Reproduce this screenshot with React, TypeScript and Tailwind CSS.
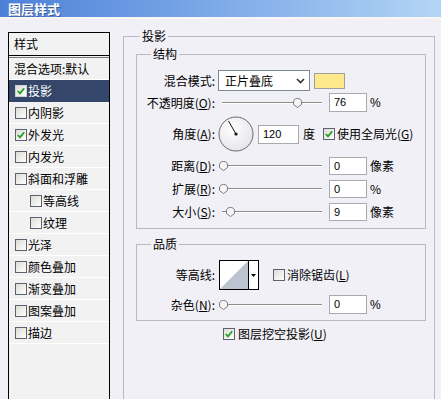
import React from "react";

const styles = [
  { t: "投影", on: true, sel: true },
  { t: "内阴影" },
  { t: "外发光", on: true },
  { t: "内发光" },
  { t: "斜面和浮雕" },
  { t: "等高线", sub: true },
  { t: "纹理", sub: true },
  { t: "光泽" },
  { t: "颜色叠加" },
  { t: "渐变叠加" },
  { t: "图案叠加" },
  { t: "描边" },
];

function Box({ on, className = "" }: { on?: boolean; className?: string }) {
  return (
    <span
      className={`flex h-[12px] w-[12px] shrink-0 items-center justify-center border border-[#5a6270] bg-gradient-to-br from-[#dcdcd6] to-white ${className}`}
    >
      {on && (
        <svg width="8" height="8" viewBox="0 0 8 8">
          <path d="M0.8 4 L3 6.3 L7.2 1.2" fill="none" stroke="#21a021" strokeWidth="1.8" />
        </svg>
      )}
    </span>
  );
}

function Lbl({ children }: { children: React.ReactNode }) {
  return <span className="w-[78px] shrink-0 text-right leading-[14px]">{children}</span>;
}

function Slider({ pos }: { pos: number }) {
  return (
    <div className="relative ml-[4px] h-[12px] w-[104px] shrink-0">
      <div className="absolute left-[3px] right-[1px] top-[5px] h-[2px] border-t border-[#8d8d8d] bg-white" />
      <svg className="absolute top-[1px]" style={{ left: pos }} width="9" height="10" viewBox="0 0 9 10">
        <path
          d="M0.5 4 C0.5 1.5 2.2 0.5 4.5 0.5 C6.8 0.5 8.5 1.5 8.5 4 V6.5 L4.5 9.5 L0.5 6.5 Z"
          fill="#f6f6f6"
          stroke="#7b7b7b"
        />
      </svg>
    </div>
  );
}

function Num({ v, className = "" }: { v: string; className?: string }) {
  return (
    <div
      className={`flex shrink-0 items-center border border-[#a9a9b0] bg-white pl-[4px] font-['Liberation_Sans',Arial,sans-serif] text-[11px] ${className}`}
    >
      {v}
    </div>
  );
}

export default function App() {
  return (
    <div className="flex h-[399px] w-[441px] flex-col overflow-hidden bg-[#f1f0f6] font-['Noto_Sans_CJK_SC',sans-serif] text-[12px] text-black">
      {/* title bar */}
      <div className="flex h-[17px] shrink-0 items-center bg-gradient-to-r from-[#4d81d8] via-[#7eaae8] to-[#b3d5f5] pl-[8px] text-[13px] font-bold leading-[16px] text-white [text-shadow:1px_1px_0_#3b5d96]">
        图层样式
      </div>
      <div className="h-[2px] shrink-0 bg-[#fbf5f5]" />

      <div className="flex flex-1">
        {/* style list */}
        <div className="ml-[8px] mt-[13px] flex h-[400px] w-[102px] shrink-0 flex-col border border-black bg-[#f2f2f2]">
          <div className="flex h-[23px] items-center border-b border-black pl-[5px] leading-[14px]">样式</div>
          <div className="h-[2px] border-b border-[#7a7a7a]" />
          <div className="flex h-[22px] items-center border-b border-white pl-[5px] leading-[14px]">混合选项:默认</div>
          {styles.map((s) => (
            <div
              key={s.t}
              className={`flex h-[22px] items-center border-b leading-[14px] ${
                s.sub ? "pl-[21px]" : "pl-[6px]"
              } ${s.sel ? "border-[#344669] bg-[#344669] text-white" : "border-white"}`}
            >
              <Box on={s.on} className={s.sel ? "border-[#d0d0d0]" : ""} />
              <span className="ml-[1px]">{s.t}</span>
            </div>
          ))}
        </div>

        {/* drop shadow */}
        <fieldset className="ml-[13px] mt-[9px] h-[400px] w-[312px] shrink-0 border border-[#b9b9c3] pl-[12px] pr-[8px]">
          <legend className="ml-[4px] px-[2px] leading-[16px]">投影</legend>

          <fieldset className="mt-[2px] h-[183px] w-[290px] border border-[#b9b9c3]">
            <legend className="ml-[14px] px-[2px] leading-[16px]">结构</legend>

            <div className="mt-[8px] flex h-[21px] items-center">
              <Lbl>混合模式:</Lbl>
              <div className="ml-[3px] flex h-[21px] w-[92px] shrink-0 items-center justify-between border border-[#7f8a98] bg-white pl-[6px] pr-[4px] leading-[14px]">
                正片叠底
                <svg width="9" height="6" viewBox="0 0 9 6">
                  <path d="M1 1 L4.5 4.5 L8 1" stroke="#333" strokeWidth="1.6" fill="none" />
                </svg>
              </div>
              <div className="ml-[4px] h-[16px] w-[31px] shrink-0 border border-[#a0a0a0] bg-[#fde98c]" />
            </div>

            <div className="mt-[2px] flex h-[19px] items-center">
              <Lbl>
                不透明度(<u>O</u>):
              </Lbl>
              <Slider pos={74} />
              <Num v="76" className="ml-[6px] h-[19px] w-[38px]" />
              <span className="ml-[3px] font-['Liberation_Sans',Arial,sans-serif]">%</span>
            </div>

            <div className="mt-[4px] flex h-[36px] items-center">
              <Lbl>
                角度(<u>A</u>):
              </Lbl>
              <svg className="ml-[3px] shrink-0" width="36" height="36" viewBox="0 0 36 36">
                <defs>
                  <radialGradient id="dg" cx="40%" cy="35%" r="70%">
                    <stop offset="0" stopColor="#ffffff" />
                    <stop offset="1" stopColor="#e4e4ea" />
                  </radialGradient>
                </defs>
                <circle cx="18" cy="18" r="17" fill="url(#dg)" stroke="#6a6a6a" />
                <line x1="18" y1="18" x2="10.5" y2="5" stroke="#111" strokeWidth="1" />
                <circle cx="18" cy="18" r="1.6" fill="#111" />
              </svg>
              <Num v="120" className="ml-[4px] h-[19px] w-[41px]" />
              <span className="ml-[4px] leading-[14px]">度</span>
              <Box on className="ml-[8px]" />
              <span className="ml-[2px] leading-[14px]">
                使用全局光(<u>G</u>)
              </span>
            </div>

            {[
              { l: "距离", k: "D", v: "0", u: "像素", p: 0 },
              { l: "扩展", k: "R", v: "0", u: "%", p: 0 },
              { l: "大小", k: "S", v: "9", u: "像素", p: 7 },
            ].map((r) => (
              <div key={r.k} className="mt-[5px] flex h-[18px] items-center">
                <Lbl>
                  {r.l}(<u>{r.k}</u>):
                </Lbl>
                <Slider pos={r.p} />
                <Num v={r.v} className="ml-[6px] h-[18px] w-[38px]" />
                <span className="ml-[3px] leading-[14px]">{r.u}</span>
              </div>
            ))}
          </fieldset>

          <fieldset className="mt-[7px] h-[85px] w-[290px] border border-[#b9b9c3]">
            <legend className="ml-[14px] px-[2px] leading-[16px]">品质</legend>

            <div className="mt-[8px] flex h-[30px] items-center">
              <Lbl>等高线:</Lbl>
              <div className="ml-[4px] flex h-[30px] w-[40px] shrink-0 border border-black bg-white">
                <svg className="shrink-0" width="28" height="28" viewBox="0 0 28 28">
                  <polygon points="0,28 28,0 28,28" fill="#bcc4cf" />
                </svg>
                <div className="flex flex-1 items-center justify-center border-l border-black">
                  <svg width="5" height="3" viewBox="0 0 5 3">
                    <polygon points="0,0 5,0 2.5,3" fill="#000" />
                  </svg>
                </div>
              </div>
              <Box className="ml-[14px]" />
              <span className="ml-[2px] leading-[14px]">
                消除锯齿(<u>L</u>)
              </span>
            </div>

            <div className="mt-[5px] flex h-[19px] items-center">
              <Lbl>
                杂色(<u>N</u>):
              </Lbl>
              <Slider pos={0} />
              <Num v="0" className="ml-[6px] h-[19px] w-[38px]" />
              <span className="ml-[3px] font-['Liberation_Sans',Arial,sans-serif]">%</span>
            </div>
          </fieldset>

          <div className="mt-[6px] flex h-[13px] items-center pl-[87px]">
            <Box on />
            <span className="ml-[3px] leading-[14px]">
              图层挖空投影(<u>U</u>)
            </span>
          </div>
        </fieldset>
      </div>
    </div>
  );
}
